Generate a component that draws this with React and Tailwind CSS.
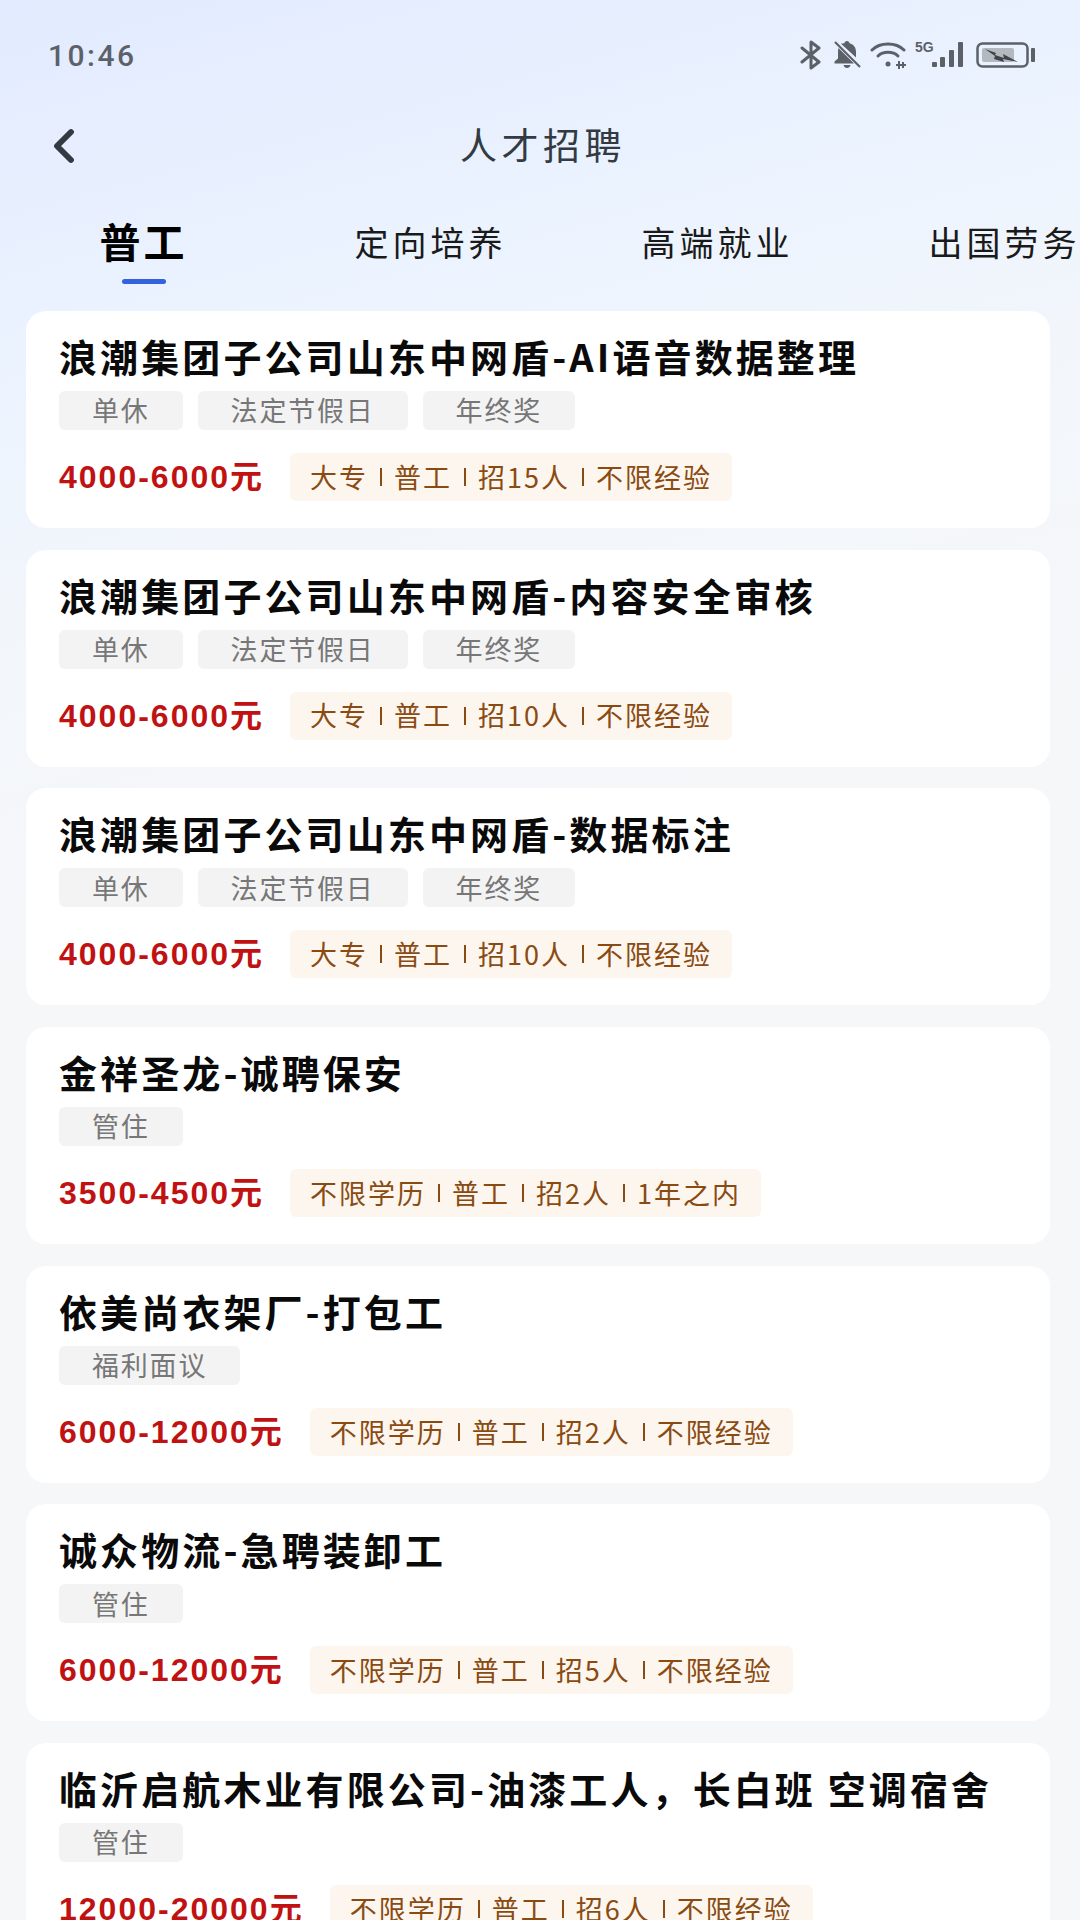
import { ChevronLeft } from 'lucide-react';

const jobs = [
  { title: '浪潮集团子公司山东中网盾-AI语音数据整理', tags: ['单休', '法定节假日', '年终奖'], pay: '4000-6000元', info: ['大专', '普工', '招15人', '不限经验'] },
  { title: '浪潮集团子公司山东中网盾-内容安全审核', tags: ['单休', '法定节假日', '年终奖'], pay: '4000-6000元', info: ['大专', '普工', '招10人', '不限经验'] },
  { title: '浪潮集团子公司山东中网盾-数据标注', tags: ['单休', '法定节假日', '年终奖'], pay: '4000-6000元', info: ['大专', '普工', '招10人', '不限经验'] },
  { title: '金祥圣龙-诚聘保安', tags: ['管住'], pay: '3500-4500元', info: ['不限学历', '普工', '招2人', '1年之内'] },
  { title: '依美尚衣架厂-打包工', tags: ['福利面议'], pay: '6000-12000元', info: ['不限学历', '普工', '招2人', '不限经验'] },
  { title: '诚众物流-急聘装卸工', tags: ['管住'], pay: '6000-12000元', info: ['不限学历', '普工', '招5人', '不限经验'] },
  { title: '临沂启航木业有限公司-油漆工人，长白班 空调宿舍', tags: ['管住'], pay: '12000-20000元', info: ['不限学历', '普工', '招6人', '不限经验'] },
];

const tabs = ['普工', '定向培养', '高端就业', '出国劳务'];

const StatusIcons = () => (
  <div className="flex items-center text-[#5c6168]">
    {/* bluetooth */}
    <svg width="24" height="30" viewBox="0 0 24 30" fill="none" stroke="currentColor" strokeWidth="3" strokeLinejoin="round" strokeLinecap="round">
      <path d="M3 8l17 14-8 6V2l8 6L3 22" />
    </svg>
    {/* bell off */}
    <svg className="ml-[9px]" width="30" height="30" viewBox="0 0 30 30" fill="currentColor">
      <path d="M15 1c1.500 0 2.500 1 2.500 2.300 4.200 1 6.500 4.500 6.500 8.700v5.500L9 3.800c1.200-.5 2.500-.5 3.500-.6C12.500 2 13.500 1 15 1z" />
      <path d="M6.500 8l15.500 15.500H2.500v-2L6 18.500V12c0-1.500.1-2.800.5-4z" />
      <path d="M11.500 25h7c-.4 1.800-1.800 3-3.500 3s-3.100-1.200-3.500-3z" />
      <path d="M3 2l25 25" stroke="currentColor" strokeWidth="2.200" />
    </svg>
    {/* wifi */}
    <svg className="ml-[8px]" width="38" height="28" viewBox="0 0 38 28" fill="none" stroke="currentColor" strokeWidth="3" strokeLinecap="round">
      <path d="M2 9c8-8 24-8 32 0" />
      <path d="M8 15c5-5 15-5 20 0" />
      <circle cx="18" cy="23" r="2.500" fill="currentColor" stroke="none" />
      <path d="M26 24h10M29 20v8M33 21v6" strokeWidth="2" strokeLinecap="butt" />
    </svg>
    <div className="relative ml-[7px] h-[28px] w-[50px]">
      <span className="absolute left-0 top-[-3px] text-[14px] font-bold leading-[18px]" style={{ fontFamily: '"Liberation Sans", sans-serif' }}>5G</span>
      {/* signal bars */}
      <svg className="absolute left-[17px] top-[1px]" width="33" height="26" viewBox="0 0 33 26" fill="currentColor">
        <rect x="0" y="20" width="5" height="5" rx="1" />
        <rect x="8" y="15" width="5" height="10" rx="1" />
        <rect x="17" y="8" width="5" height="17" rx="1" />
        <rect x="26" y="0" width="5" height="25" rx="1" />
      </svg>
    </div>
    {/* battery */}
    <svg className="ml-[11px]" width="60" height="26" viewBox="0 0 60 26" fill="none">
      <rect x="1.500" y="1.500" width="50" height="23" rx="5" stroke="currentColor" strokeWidth="2.500" />
      <rect x="6" y="6" width="32" height="14" rx="2" fill="#b4b9c0" />
      <path d="M9 7l11 4-1 2 9 3-1-4 15 8-15-3 1 3-10-3 1-3z" fill="#3f444b" />
      <rect x="55" y="6" width="4" height="14" rx="1" fill="currentColor" />
    </svg>
  </div>
);

const JobCard = ({ job }) => (
  <div className="h-[217px] rounded-[20px] bg-white pl-[33px] pt-[20px]">
    <h2 className="text-[38px] font-bold leading-[50px] tracking-[3.100px] text-[#0a0a0a] whitespace-nowrap">{job.title}</h2>
    <div className="mt-[10px] flex gap-[15px]">
      {job.tags.map((tag) => (
        <span key={tag} className="flex h-[39px] items-center rounded-[6px] bg-[#f3f3f4] px-[33px] text-[27px] tracking-[1.800px] text-[#777777]">
          {tag}
        </span>
      ))}
    </div>
    <div className="mt-[23px] flex items-center">
      <span className="text-[32px] font-bold tracking-[2px] text-[#c01212] whitespace-nowrap" style={{ fontFamily: '"Liberation Sans", "Noto Sans CJK SC", sans-serif' }}>{job.pay}</span>
      <div className="ml-[26px] flex h-[48px] items-center rounded-[6px] bg-[#fdf6ef] px-[20px] text-[27px] tracking-[2px] text-[#8a4b12] whitespace-nowrap">
        {job.info.map((item, i) => (
          <span key={item} className="flex items-center">
            {i > 0 && <span className="mx-[12px] h-[18px] w-[2px] bg-[#8a4b12]" />}
            {item}
          </span>
        ))}
      </div>
    </div>
  </div>
);

export default function App() {
  return (
    <div
      className="h-[1920px] w-[1080px] overflow-hidden bg-[linear-gradient(165deg,#e2eaff_0%,#ebf3ff_16%,#f2f6fb_28%,#f6f7f9_45%,#f6f7f9_100%)]"
      style={{ fontFamily: '"Noto Sans CJK SC", "Noto Sans", sans-serif' }}
    >
      {/* STATUS BAR */}
      <div className="flex h-[110px] items-center justify-between pl-[48px] pr-[44px]">
        <span className="text-[30px] font-medium tracking-[2.500px] text-[#5c6168]" style={{ fontFamily: 'Roboto, sans-serif' }}>10:46</span>
        <StatusIcons />
      </div>

      {/* NAV */}
      <div className="relative flex h-[72px] items-center justify-center">
        <ChevronLeft className="absolute left-[36px] top-[8px] text-[#333a42]" size={56} strokeWidth={2.500} />
        <h1 className="mb-[3px] ml-[6px] text-[37px] tracking-[4.500px] text-[#333a42]">人才招聘</h1>
      </div>

      {/* TABS */}
      <div className="mt-[23px] flex w-[1148px]">
        {tabs.map((tab, i) => (
          <div key={tab} className="relative flex h-[72px] w-[287px] items-center justify-center">
            <span className={i === 0 ? 'text-[41px] font-bold tracking-[3px] text-black' : 'text-[34px] tracking-[4px] text-[#1a1a1a]'}>{tab}</span>
            {i === 0 && <div className="absolute bottom-[-7px] h-[5px] w-[44px] rounded-full bg-[#3560e0]" />}
          </div>
        ))}
      </div>

      {/* JOB LIST */}
      <div className="mt-[34px] flex flex-col gap-[21.7px] pl-[26px] pr-[30px]">
        {jobs.map((job) => (
          <JobCard key={job.title} job={job} />
        ))}
      </div>
    </div>
  );
}
